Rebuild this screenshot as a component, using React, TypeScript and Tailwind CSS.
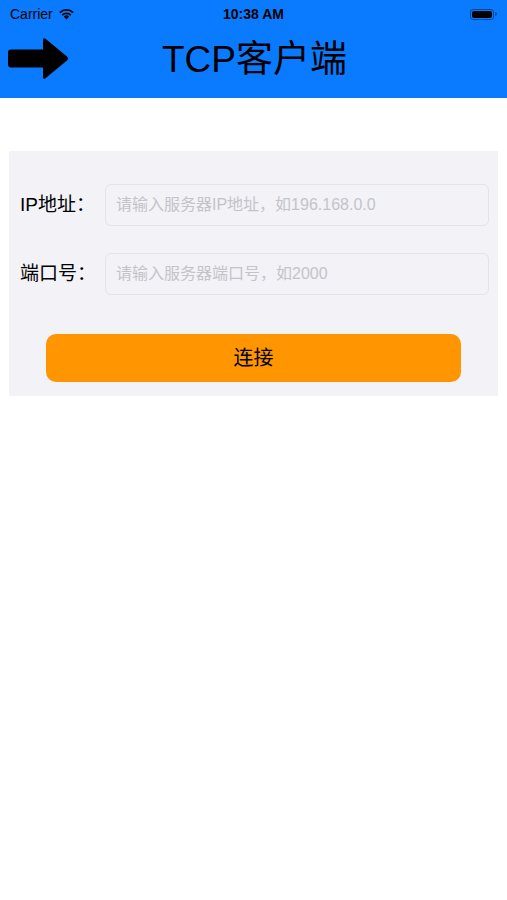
const font = { fontFamily: '"Liberation Sans", "Noto Sans CJK SC", sans-serif' }

function StatusBar() {
  return (
    <div className="h-[28px] flex items-center justify-between px-[10px] text-black">
      <div className="flex items-center gap-[5px] w-[120px]">
        <span className="text-[14px] font-['Liberation_Sans'] leading-none">Carrier</span>
        <svg width="17" height="12" viewBox="0 0 17 12">
          <path d="M8.5 11.5 L5.8 8.6 A4 4 0 0 1 11.2 8.6 Z" fill="black" />
          <path d="M3.6 6.4 A7 7 0 0 1 13.4 6.4 L12.1 7.7 A5.2 5.2 0 0 0 4.9 7.7 Z" fill="black" />
          <path d="M1.2 4 A10.4 10.4 0 0 1 15.8 4 L14.5 5.3 A8.6 8.6 0 0 0 2.5 5.3 Z" fill="black" />
        </svg>
      </div>
      <span className="text-[14px] font-semibold font-['Liberation_Sans'] leading-none">10:38 AM</span>
      <div className="w-[120px] flex justify-end">
        <div className="flex items-center gap-[1px]">
          <div className="w-[24px] h-[11px] rounded-[3px] border border-black/40 p-[1px]">
            <div className="w-full h-full rounded-[2px] bg-black" />
          </div>
          <div className="w-[2px] h-[4px] rounded-r-sm bg-black/40" />
        </div>
      </div>
    </div>
  )
}

function NavBar() {
  return (
    <div className="h-[70px] relative flex items-center justify-center">
      <svg className="absolute left-[8px] top-[9px]" width="61" height="43" viewBox="0 0 61 43">
        <path
          d="M3 12.5 L35 12.5 L35 3 Q35 0 37.5 1.8 L59 19.5 Q61 21.5 59 23.5 L37.5 41.2 Q35 43 35 40 L35 30.5 L3 30.5 Q0 30.5 0 27.5 L0 15.5 Q0 12.5 3 12.5 Z"
          fill="black"
        />
      </svg>
      <span className="text-[37px] text-black leading-none -mt-[8px] pl-[2px]" style={font}>
        TCP客户端
      </span>
    </div>
  )
}

function Field({ label, placeholder }: { label: string; placeholder: string }) {
  return (
    <div className="flex items-center">
      <span className="w-[96px] pl-[11px] text-[19px] text-black whitespace-nowrap" style={font}>
        {label}
      </span>
      <input
        className="flex-1 h-[42px] rounded-[6px] border border-[#e3e3e8] bg-[#f2f2f7] px-[10px] text-[16px] placeholder:text-[#c4c4c8] outline-none"
        style={font}
        placeholder={placeholder}
      />
    </div>
  )
}

export default function App() {
  return (
    <div className="w-[507px] h-[900px] bg-white">
      <div className="bg-[#0a7bfe]">
        <StatusBar />
        <NavBar />
      </div>
      <div className="mt-[53px] mx-[9px] bg-[#f2f2f7] pt-[33px] pb-[14px] pr-[9px]">
        <div className="flex flex-col gap-[27px]">
          <Field label="IP地址：" placeholder="请输入服务器IP地址，如196.168.0.0" />
          <Field label="端口号：" placeholder="请输入服务器端口号，如2000" />
        </div>
        <div className="mt-[39px] pl-[37px] pr-[28px]">
          <button
            className="w-full h-[48px] rounded-[10px] bg-[#ff9500] text-[20px] text-black"
            style={font}
          >
            连接
          </button>
        </div>
      </div>
    </div>
  )
}
